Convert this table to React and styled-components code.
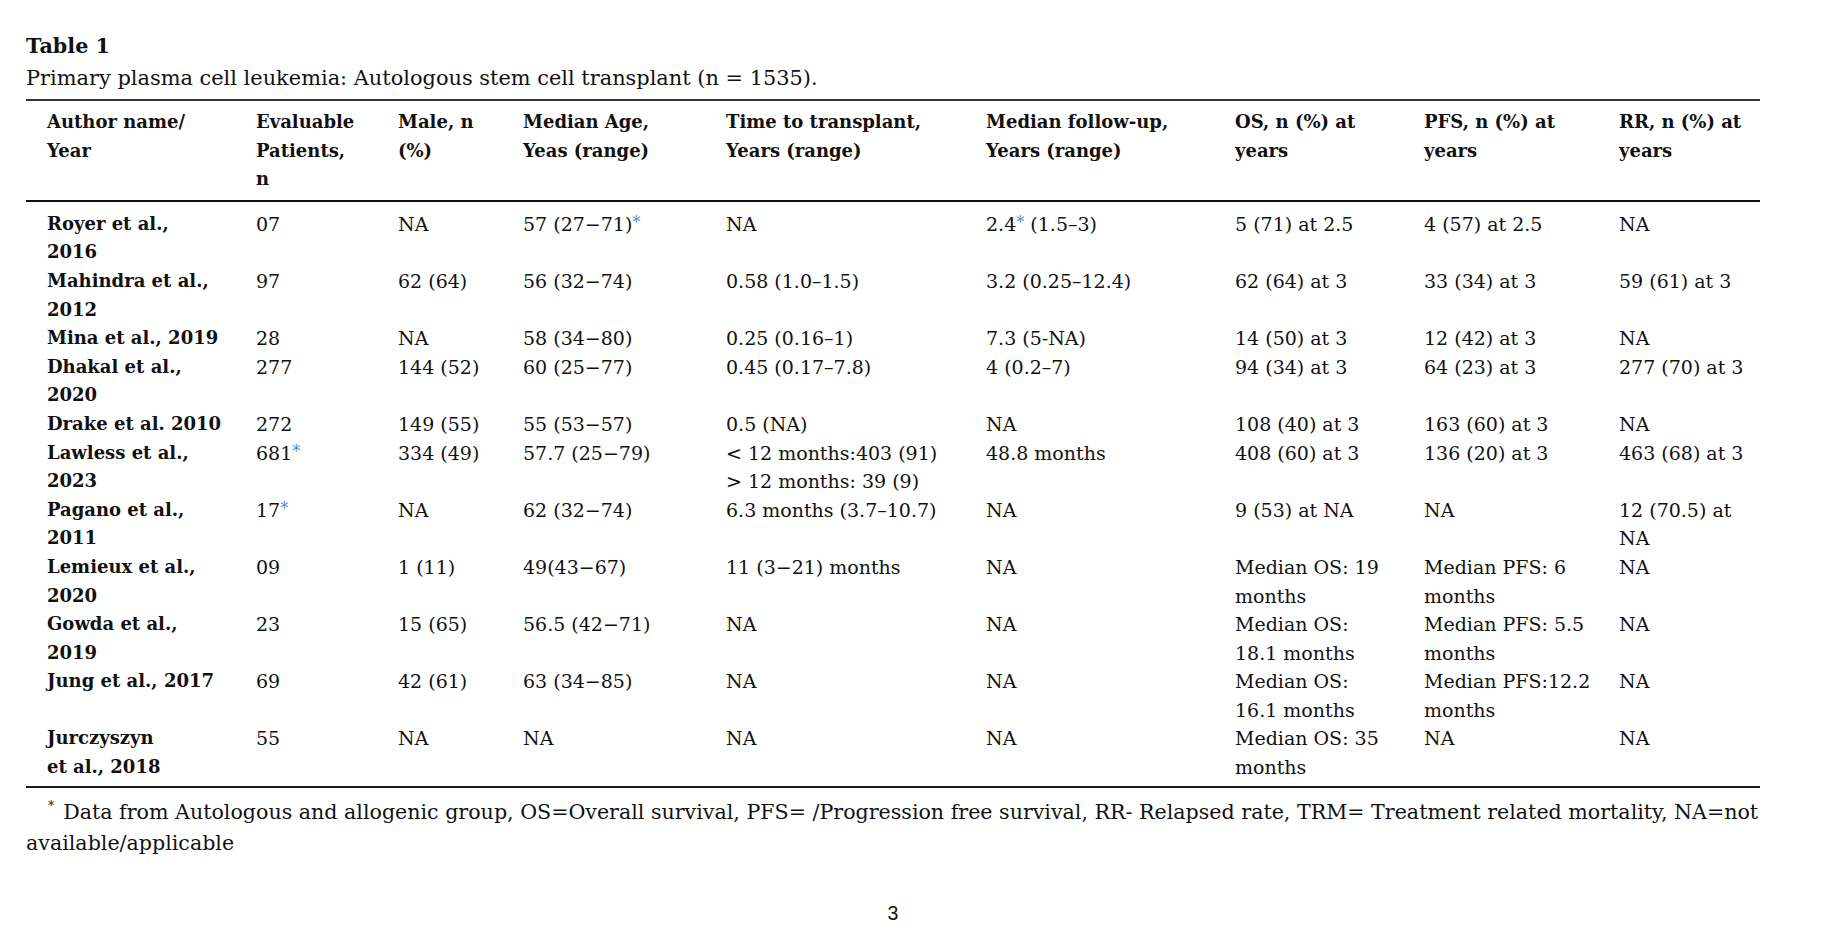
import React from 'react';
import styled, { createGlobalStyle } from 'styled-components';

const GlobalStyle = createGlobalStyle`
  html, body {
    margin: 0;
    padding: 0;
    background: #ffffff;
  }
  body {
    font-family: 'DejaVu Serif', 'Liberation Serif', serif;
    color: #111;
  }
`;

const Page = styled.div`
  width: 1734px;
  padding: 31px 0 0 26px;
`;

const Title = styled.h1`
  margin: 0;
  font-size: 20.7px;
  font-weight: bold;
  line-height: 30px;
`;

const Caption = styled.p`
  margin: 2px 0 6px;
  font-size: 20.9px;
  line-height: 30px;
`;

const Table = styled.table`
  width: 100%;
  border-collapse: collapse;
  table-layout: fixed;
  border-top: 2px solid #333;
  border-bottom: 2px solid #1a1a1a;
  line-height: 28.6px;
`;

const HeadRow = styled.tr`
  border-bottom: 2px solid #111;
`;

const HeadCell = styled.th`
  text-align: left;
  vertical-align: top;
  font-size: 18px;
  font-weight: bold;
  white-space: pre;
  padding: 7px 0 6px ${p => (p.$first ? '21px' : '0')};
`;

const Row = styled.tr`
  &:first-child td {
    padding-top: 8px;
  }
  &:last-child td {
    padding-bottom: 4px;
  }
`;

const Cell = styled.td`
  vertical-align: top;
  white-space: pre;
  padding: 0 0 0 ${p => (p.$first ? '21px' : '0')};
  font-size: ${p => (p.$first ? '18px' : '19px')};
  font-weight: ${p => (p.$first ? 'bold' : 'normal')};
`;

const Star = styled.span`
  color: #3f8fcf;
  font-size: 0.85em;
  vertical-align: 0.2em;
  line-height: 0;
`;

const Footnote = styled.p`
  margin: 9px 0 0;
  font-size: 20.6px;
  line-height: 31px;
  white-space: nowrap;
`;

const FootMark = styled.sup`
  font-size: 0.6em;
  margin: 0 9px 0 22px;
  vertical-align: 0.7em;
  line-height: 0;
`;

const PageNumber = styled.div`
  margin-top: 43px;
  text-align: center;
  font-family: 'Liberation Sans', Arial, sans-serif;
  font-size: 19.5px;
  line-height: 22px;
`;

const widths = [230, 142, 125, 203, 260, 249, 189, 195, 141];

const headers = [
  'Author name/\nYear',
  'Evaluable\nPatients,\nn',
  'Male, n\n(%)',
  'Median Age,\nYeas (range)',
  'Time to transplant,\nYears (range)',
  'Median follow-up,\nYears (range)',
  'OS, n (%) at\nyears',
  'PFS, n (%) at\nyears',
  'RR, n (%) at\nyears',
];

const S = () => <Star>*</Star>;

const rows = [
  ['Royer et al.,\n2016', '07', 'NA', <>57 (27−71)<S /></>, 'NA', <>2.4<S /> (1.5–3)</>, '5 (71) at 2.5', '4 (57) at 2.5', 'NA'],
  ['Mahindra et al.,\n2012', '97', '62 (64)', '56 (32−74)', '0.58 (1.0–1.5)', '3.2 (0.25–12.4)', '62 (64) at 3', '33 (34) at 3', '59 (61) at 3'],
  ['Mina et al., 2019', '28', 'NA', '58 (34−80)', '0.25 (0.16–1)', '7.3 (5-NA)', '14 (50) at 3', '12 (42) at 3', 'NA'],
  ['Dhakal et al.,\n2020', '277', '144 (52)', '60 (25−77)', '0.45 (0.17–7.8)', '4 (0.2–7)', '94 (34) at 3', '64 (23) at 3', '277 (70) at 3'],
  ['Drake et al. 2010', '272', '149 (55)', '55 (53−57)', '0.5 (NA)', 'NA', '108 (40) at 3', '163 (60) at 3', 'NA'],
  ['Lawless et al.,\n2023', <>681<S /></>, '334 (49)', '57.7 (25−79)', '< 12 months:403 (91)\n> 12 months: 39 (9)', '48.8 months', '408 (60) at 3', '136 (20) at 3', '463 (68) at 3'],
  ['Pagano et al.,\n2011', <>17<S /></>, 'NA', '62 (32−74)', '6.3 months (3.7–10.7)', 'NA', '9 (53) at NA', 'NA', '12 (70.5) at\nNA'],
  ['Lemieux et al.,\n2020', '09', '1 (11)', '49(43−67)', '11 (3−21) months', 'NA', 'Median OS: 19\nmonths', 'Median PFS: 6\nmonths', 'NA'],
  ['Gowda et al.,\n2019', '23', '15 (65)', '56.5 (42−71)', 'NA', 'NA', 'Median OS:\n18.1 months', 'Median PFS: 5.5\nmonths', 'NA'],
  ['Jung et al., 2017', '69', '42 (61)', '63 (34−85)', 'NA', 'NA', 'Median OS:\n16.1 months', 'Median PFS:12.2\nmonths', 'NA'],
  ['Jurczyszyn\net al., 2018', '55', 'NA', 'NA', 'NA', 'NA', 'Median OS: 35\nmonths', 'NA', 'NA'],
];

export default function App() {
  return (
    <>
      <GlobalStyle />
      <Page>
        <Title>Table 1</Title>
        <Caption>Primary plasma cell leukemia: Autologous stem cell transplant (n = 1535).</Caption>
        <Table>
          <colgroup>
            {widths.map((w, i) => (
              <col key={i} style={{ width: w }} />
            ))}
          </colgroup>
          <thead>
            <HeadRow>
              {headers.map((h, i) => (
                <HeadCell key={i} $first={i === 0}>{h}</HeadCell>
              ))}
            </HeadRow>
          </thead>
          <tbody>
            {rows.map((r, ri) => (
              <Row key={ri}>
                {r.map((c, ci) => (
                  <Cell key={ci} $first={ci === 0}>{c}</Cell>
                ))}
              </Row>
            ))}
          </tbody>
        </Table>
        <Footnote>
          <FootMark>*</FootMark>Data from Autologous and allogenic group, OS=Overall survival, PFS= /Progression free survival, RR- Relapsed rate, TRM= Treatment related mortality, NA=not
          <br />
          available/applicable
        </Footnote>
        <PageNumber>3</PageNumber>
      </Page>
    </>
  );
}
